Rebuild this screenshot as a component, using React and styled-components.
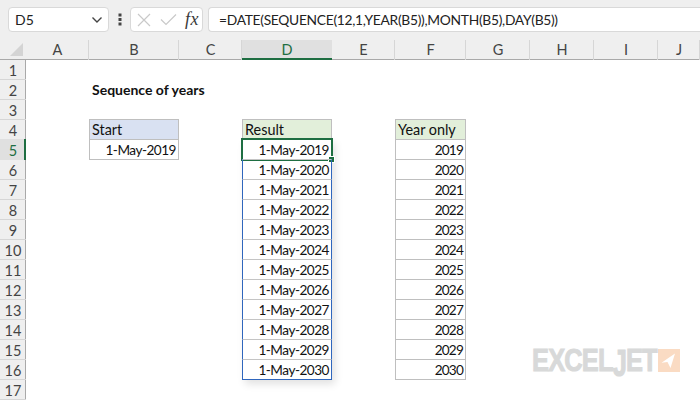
import React from 'react';
import styled, { createGlobalStyle } from 'styled-components';

const Global = createGlobalStyle`
  html, body { margin: 0; padding: 0; background: #fff; }
  body { width: 700px; height: 400px; overflow: hidden; font-family: Lato, "Liberation Sans", sans-serif; }
`;

const Page = styled.div`
  position: relative;
  width: 700px;
  height: 400px;
  overflow: hidden;
  background: #fff;
`;

const FormulaBar = styled.div`
  height: 40px;
  box-sizing: border-box;
  padding: 7px 0 8px 8px;
  display: flex;
  align-items: stretch;
  background: #efefef;
`;

const Box = styled.div`
  box-sizing: border-box;
  background: #fff;
  border: 1px solid #d9d9d9;
  border-radius: 4px;
  display: flex;
  align-items: center;
`;

const NameBox = styled(Box)`
  width: 101px;
  padding: 0 5px 0 6px;
  justify-content: space-between;
  font-size: 14px;
  color: #222;
`;

const Dots = styled.div`
  width: 21px;
  display: flex;
  align-items: center;
  justify-content: center;
`;

const FxBox = styled(Box)`
  width: 73px;
  padding: 0 3px 0 6px;
  justify-content: space-between;
  margin-right: 5px;
`;

const FxLabel = styled.span`
  font-family: "Liberation Serif", serif;
  font-style: italic;
  font-size: 18px;
  color: #3a3a3a;
  letter-spacing: 0.5px;
`;

const FormulaBox = styled(Box)`
  flex: 1;
  padding-left: 10px;
  border-right: none;
  border-radius: 4px 0 0 4px;
  font-size: 13.8px;
  letter-spacing: -0.29px;
  color: #222;
  white-space: nowrap;
`;

const Columns = '26px 63px 90px 63px 90px 63px 71px 64px 64px 64px 42px';

const HeaderRow = styled.div`
  display: grid;
  grid-template-columns: ${Columns};
  height: 20px;
  box-sizing: border-box;
  background: #efefef;
  border-bottom: 1px solid #a9a9a9;
`;

const Corner = styled.div`
  position: relative;
  svg { position: absolute; right: 3px; bottom: 3px; }
`;

const ColHead = styled.div`
  display: flex;
  align-items: center;
  justify-content: center;
  font-size: 14.5px;
  color: ${p => (p.$active ? '#1e6e42' : '#444')};
  background: ${p => (p.$active ? '#e0e0e0' : 'transparent')};
  box-shadow: ${p => (p.$active ? 'inset 0 -2px 0 #1e6e42' : 'inset -1px 0 0 #d6d6d6')};
  margin-bottom: -1px;
  padding-bottom: 1px;
`;

const Body = styled.div`
  display: grid;
  grid-template-columns: ${Columns};
  grid-auto-rows: 20px;
`;

const RowHead = styled.div`
  grid-column: 1;
  grid-row: ${p => p.$row};
  display: flex;
  align-items: center;
  justify-content: center;
  font-size: 14.5px;
  margin-top: ${p => (p.$active ? '-1px' : '0')};
  padding-top: ${p => (p.$active ? '1px' : '0')};
  color: ${p => (p.$active ? '#1e6e42' : '#444')};
  background: ${p => (p.$active ? '#e0e0e0' : '#efefef')};
  box-shadow: ${p => (p.$active ? 'inset -2px 0 0 #1e6e42' : 'inset 0 -1px 0 #d6d6d6, inset -1px 0 0 #a9a9a9')};
`;

const Cell = styled.div`
  grid-column: ${p => p.$col};
  grid-row: ${p => p.$row};
  box-sizing: border-box;
  display: flex;
  align-items: center;
  justify-content: ${p => (p.$right ? 'flex-end' : 'flex-start')};
  padding: 0 2px;
  margin-top: -1px;
  height: 21px;
  font-size: 14.4px;
  color: #111;
  white-space: nowrap;
  background: ${p => p.$bg || 'transparent'};
  border-style: solid;
  border-color: ${p => p.$line || 'transparent'};
  border-width: ${p => (p.$line ? '1px' : '0')};
  border-top-color: ${p => p.$top || p.$line || 'transparent'};
  position: relative;
`;

const Title = styled(Cell)`
  font-size: 14px;
  font-weight: 700;
  padding-left: 3px;
`;

const DateCell = styled(Cell)`
  padding-top: 1px;
  font-size: 13.6px;
  letter-spacing: -0.5px;
`;

const YearCell = styled(Cell)`
  padding-top: 1px;
  font-size: 13.6px;
  letter-spacing: -0.8px;
`;

const Selection = styled.div`
  position: absolute;
  left: -2px;
  top: -2px;
  right: -2px;
  bottom: -2px;
  border: 2px solid #1e6e42;
  pointer-events: none;
  &::after {
    content: '';
    position: absolute;
    right: -4px;
    bottom: -4px;
    width: 5px;
    height: 5px;
    background: #1e6e42;
    border: 1px solid #fff;
  }
`;

const SpillShadow = styled.div`
  grid-column: 5;
  grid-row: 5 / span 12;
  margin-top: -1px;
  box-shadow: 3px 4px 8px rgba(0,0,0,0.12);
  pointer-events: none;
`;

const Logo = styled.div`
  position: absolute;
  left: 532px;
  top: 349px;
  display: flex;
  align-items: flex-start;
`;

const LogoText = styled.span`
  display: block;
  width: 126px;
  white-space: nowrap;
  font-family: "Liberation Sans", sans-serif;
  font-weight: 700;
  font-size: 31px;
  line-height: 23px;
  letter-spacing: -1px;
  color: #d8d9d9;
  -webkit-text-stroke: 1px #d8d9d9;
  transform: scaleX(0.82);
  transform-origin: left top;
`;

const LogoJ = styled.span`
  display: inline-block;
  transform: scaleY(1.22);
  transform-origin: top;
`;

const years = Array.from({ length: 12 }, (_, i) => 2019 + i);
const columnLabels = ['A', 'B', 'C', 'D', 'E', 'F', 'G', 'H', 'I', 'J'];
const rowNumbers = Array.from({ length: 17 }, (_, i) => i + 1);

export default function App() {
  return (
    <Page>
      <Global />
      <FormulaBar>
        <NameBox>
          D5
          <svg width="12" height="8" viewBox="0 0 12 8">
            <path d="M1.5 1.5 L6 6 L10.5 1.5" fill="none" stroke="#444" strokeWidth="1.4" />
          </svg>
        </NameBox>
        <Dots>
          <svg width="4" height="13" viewBox="0 0 4 13">
            <rect x="0.5" y="0.5" width="3" height="3" fill="#444" />
            <rect x="0.5" y="5" width="3" height="3" fill="#444" />
            <rect x="0.5" y="9.5" width="3" height="3" fill="#444" />
          </svg>
        </Dots>
        <FxBox>
          <svg width="14" height="14" viewBox="0 0 14 14">
            <path d="M1 1 L13 13 M13 1 L1 13" stroke="#c9c9c9" strokeWidth="1.2" fill="none" />
          </svg>
          <svg width="17" height="13" viewBox="0 0 17 13">
            <path d="M1 6.5 L6 11.5 L16 1.5" stroke="#c9c9c9" strokeWidth="1.2" fill="none" />
          </svg>
          <FxLabel>fx</FxLabel>
        </FxBox>
        <FormulaBox>=DATE(SEQUENCE(12,1,YEAR(B5)),MONTH(B5),DAY(B5))</FormulaBox>
      </FormulaBar>

      <HeaderRow>
        <Corner>
          <svg width="13" height="13" viewBox="0 0 13 13"><path d="M13 0 V13 H0 Z" fill="#d4d4d4" /></svg>
        </Corner>
        {columnLabels.map(c => (
          <ColHead key={c} $active={c === 'D'}>{c}</ColHead>
        ))}
      </HeaderRow>

      <Body>
        {rowNumbers.map(n => (
          <RowHead key={n} $row={n} $active={n === 5}>{n}</RowHead>
        ))}

        <Title $col={3} $row={2}>Sequence of years</Title>

        <Cell $col={3} $row={4} $bg="#d9e1f2" $line="#bfbfbf">Start</Cell>
        <DateCell $col={3} $row={5} $right $line="#bfbfbf">1-May-2019</DateCell>

        <SpillShadow />
        <Cell $col={5} $row={4} $bg="#e2efda" $line="#bfbfbf">Result</Cell>
        {years.map((y, i) => (
          <DateCell key={y} $col={5} $row={5 + i} $right $line="#2f66bd" $top={i === 0 ? '#2f66bd' : '#c4c4c4'}>
            1-May-{y}
            {i === 0 && <Selection />}
          </DateCell>
        ))}

        <Cell $col={7} $row={4} $bg="#e2efda" $line="#bfbfbf">Year only</Cell>
        {years.map((y, i) => (
          <YearCell key={y} $col={7} $row={5 + i} $right $line="#bfbfbf">{y}</YearCell>
        ))}
      </Body>

      <Logo>
        <LogoText>EXCEL<LogoJ>J</LogoJ>ET</LogoText>
        <svg width="22" height="23" viewBox="0 0 22 23">
          <rect width="22" height="23" fill="#fadbc3" />
          <path d="M3.5 13.7 L17 4.5 L12.5 19 L9.5 13 Z" fill="#fff" />
        </svg>
      </Logo>
    </Page>
  );
}
